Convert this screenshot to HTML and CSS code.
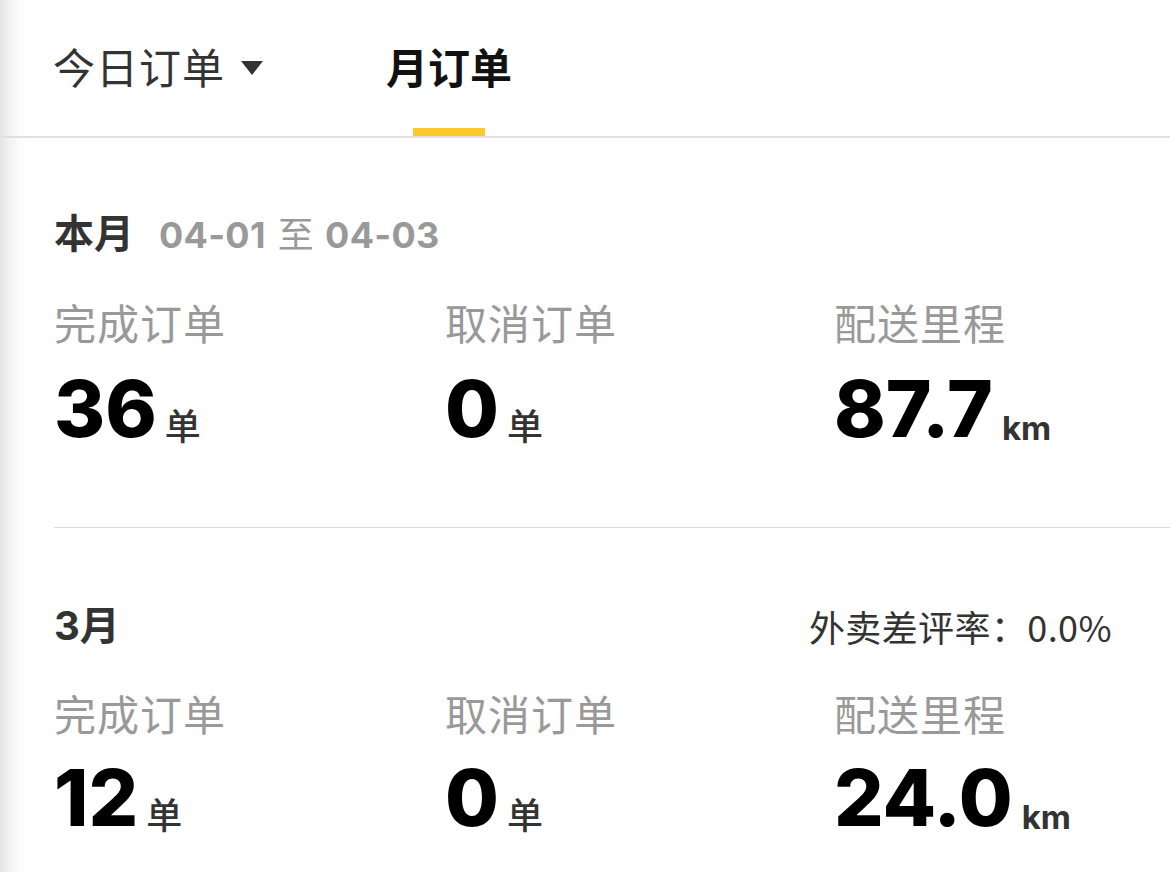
FILE: index.html
```html
<!DOCTYPE html>
<html lang="zh-CN">
<head>
<meta charset="utf-8">
<title>月订单</title>
<link rel="stylesheet" href="styles.css">
</head>
<body>
<div class="page">
  <header class="tabs">
    <div class="tab tab-dropdown"><span class="tab-text">今日订单</span><i class="caret"></i></div>
    <div class="tab tab-active"><span class="tab-label">月订单</span><span class="indicator"></span></div>
  </header>

  <section class="period period-current">
    <div class="period-head">
      <div class="period-title">本月<span class="range">04-01<span class="range-sep">至</span>04-03</span></div>
    </div>
    <div class="stats">
      <div class="stat">
        <div class="stat-label">完成订单</div>
        <div class="stat-value">36<span class="unit">单</span></div>
      </div>
      <div class="stat">
        <div class="stat-label">取消订单</div>
        <div class="stat-value">0<span class="unit">单</span></div>
      </div>
      <div class="stat">
        <div class="stat-label">配送里程</div>
        <div class="stat-value">87.7<span class="unit unit-latin">km</span></div>
      </div>
    </div>
  </section>

  <section class="period period-last">
    <div class="period-head">
      <div class="period-title">3月</div>
      <div class="rate">外卖差评率：0.0%</div>
    </div>
    <div class="stats">
      <div class="stat">
        <div class="stat-label">完成订单</div>
        <div class="stat-value">12<span class="unit">单</span></div>
      </div>
      <div class="stat">
        <div class="stat-label">取消订单</div>
        <div class="stat-value">0<span class="unit">单</span></div>
      </div>
      <div class="stat">
        <div class="stat-label">配送里程</div>
        <div class="stat-value">24.0<span class="unit unit-latin">km</span></div>
      </div>
    </div>
  </section>
</div>
</body>
</html>
```

FILE: styles.css
```css
html, body {
  margin: 0;
  padding: 0;
}

body {
  min-height: 872px;
  background: linear-gradient(90deg, #e4e4e4 0, #f3f3f3 10px, #fcfcfc 20px, #ffffff 28px);
  font-family: "Noto Sans CJK SC", sans-serif;
  color: #333;
  overflow: hidden;
}

.page {
  width: 1170px;
}

/* ---------- tabs ---------- */
.tabs {
  display: flex;
  height: 136px;
  padding-left: 53px;
  border-bottom: 2px solid #e0e0e0;
}

.tab-dropdown {
  display: flex;
  align-items: center;
  padding-bottom: 4px;
  font-size: 42px;
  line-height: 1;
  color: #333;
  letter-spacing: 1px;
}

.caret {
  display: block;
  width: 0;
  height: 0;
  margin-left: 16px;
  margin-top: 4px;
  border-left: 11px solid transparent;
  border-right: 11px solid transparent;
  border-top: 14px solid #333;
}

.tab-active {
  display: flex;
  flex-direction: column;
  align-items: center;
  margin-left: 123px;
  padding-top: 4px;
}

.tab-label {
  margin: auto 0;
  font-size: 42px;
  line-height: 1;
  font-weight: 700;
  color: #111;
}

.indicator {
  display: block;
  width: 72px;
  height: 8px;
  background: #fcc82c;
}

/* ---------- periods ---------- */
.period {
  margin-left: 54px;
  padding-right: 58px;
}

.period-current {
  padding-top: 67px;
  padding-bottom: 78px;
  border-bottom: 1px solid #dcdcdc;
}

.period-last {
  padding-top: 70px;
}

.period-head {
  display: flex;
  align-items: center;
  justify-content: space-between;
  height: 56px;
}

.period-title {
  font-family: Inter, "Noto Sans CJK SC", sans-serif;
  font-size: 40px;
  line-height: 56px;
  font-weight: 700;
  color: #333;
}

.range {
  margin-left: 25px;
  font-size: 36px;
  font-weight: 700;
  color: #999;
  letter-spacing: 0.3px;
}

.range-sep {
  margin: 0 11px 0 12px;
  font-family: "Noto Sans CJK SC", sans-serif;
  font-weight: 400;
}

.rate {
  font-family: "Noto Sans CJK SC", sans-serif;
  font-size: 36px;
  line-height: 56px;
  color: #333;
  letter-spacing: 0.4px;
}

.stats {
  display: grid;
  grid-template-columns: 391px 389px 1fr;
  margin-top: 31px;
}

.period-last .stats {
  margin-top: 29px;
}

.stat-label {
  font-size: 42px;
  line-height: 60px;
  color: #999;
  letter-spacing: 1px;
}

.stat-value {
  margin-top: 17px;
  font-family: Inter, sans-serif;
  font-size: 78px;
  line-height: 80px;
  font-weight: 800;
  color: #000;
  white-space: nowrap;
}

.period-last .stat-value {
  margin-top: 15px;
}

.unit {
  margin-left: 8px;
  font-family: "Noto Sans CJK SC", sans-serif;
  font-size: 36px;
  line-height: 1;
  font-weight: 500;
  color: #333;
  vertical-align: -3px;
}

.unit-latin {
  margin-left: 9px;
  font-family: Inter, sans-serif;
  font-size: 33px;
  font-weight: 700;
}
```
